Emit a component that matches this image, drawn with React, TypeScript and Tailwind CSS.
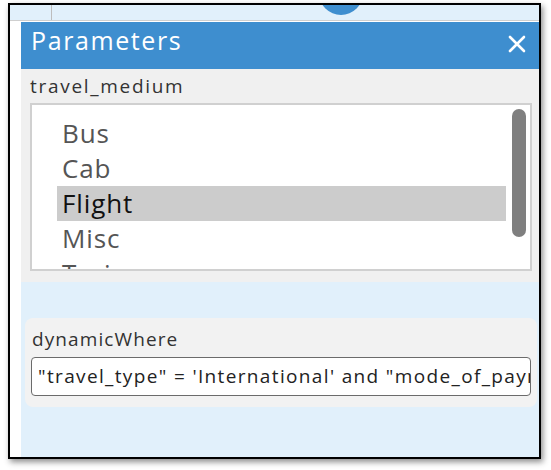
import React from "react";

const items = ["Bus", "Cab", "Flight", "Misc", "Train"];

export default function App() {
  return (
    <div
      className="w-[551px] h-[470px] bg-white pt-[3px] pl-[8px]"
      style={{ fontFamily: "'Open Sans', 'Noto Sans', sans-serif" }}
    >
      <div className="w-[533px] h-[456px] border-2 border-black shadow-[2px_3px_6px_rgba(0,0,0,0.45)] flex flex-col overflow-hidden relative bg-white">
        {/* top strip */}
        <div className="h-[15px] bg-[#e1f0fb] flex shrink-0">
          <div className="w-[42px] border-r border-[#bdbdbd]" />
        </div>
        <div className="absolute left-[309px] top-[-34px] w-[44px] h-[44px] rounded-full bg-[#3e8ecf]" />
        <div className="h-px bg-[#cfcfcf] shrink-0" />
        <div className="flex-1 flex min-h-0 pt-px">
          <div className="w-[11px] shrink-0 bg-white" />
          <div className="flex-1 flex flex-col bg-[#e1f0fb] min-w-0">
            {/* header */}
            <div className="h-[47px] bg-[#3e8ecf] flex items-start justify-between pl-[10px] pr-[13px] pt-[3px] shrink-0">
              <span className="text-white text-[25px] leading-[30px] tracking-[1.6px]">Parameters</span>
              <svg width="18" height="18" viewBox="0 0 18 18" className="mt-[10px]">
                <path d="M2 2 L16 16 M16 2 L2 16" stroke="white" strokeWidth="2.6" strokeLinecap="round" />
              </svg>
            </div>
            {/* travel_medium */}
            <div className="bg-[#f0f0f0] h-[213px] shrink-0 pl-[9px] pr-[7px] pt-[4px]">
              <div className="text-[19px] leading-[26px] tracking-[1.7px] text-[#333] h-[30px]">travel_medium</div>
              <div className="h-[168px] border-2 border-[#d0d0d0] bg-white relative overflow-hidden pl-[25px] pr-[24px] pt-[11px]">
                {items.map((it) => (
                  <div
                    key={it}
                    className={
                      "h-[35px] leading-[35px] text-[26px] tracking-[0.9px] pl-[5px] " +
                      (it === "Flight" ? "bg-[#cccccc] text-[#111]" : "text-[#555]")
                    }
                  >
                    {it}
                  </div>
                ))}
                <div className="absolute right-[4px] top-[4px] w-[14px] h-[128px] rounded-full bg-[#7f7f7f]" />
              </div>
            </div>
            <div className="h-[36px] shrink-0" />
            {/* dynamicWhere */}
            <div className="bg-[#f2f2f2] rounded-[8px] ml-[4px] mr-[2px] h-[89px] pl-[6px] pr-[6px] pt-[10px] shrink-0">
              <div className="text-[19px] leading-[22px] tracking-[1.1px] text-[#333] pl-[1px] mb-[7px]">dynamicWhere</div>
              <div className="h-[39px] border border-[#6b6b6b] rounded-[4px] bg-white flex items-center px-[6px] overflow-hidden whitespace-nowrap text-[19px] tracking-[1.35px] text-[#222]">
                "travel_type" = 'International' and "mode_of_payment" = 'Card'
              </div>
            </div>
          </div>
        </div>
      </div>
    </div>
  );
}
